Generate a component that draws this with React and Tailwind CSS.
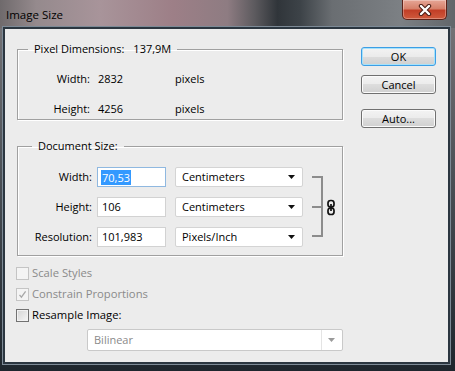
import React from 'react';

function Checkbox({ checked, disabled }) {
  return (
    <span
      className={`w-[13px] h-[13px] flex items-center justify-center border ${
        disabled
          ? 'border-[#c4c4c4] bg-[#f4f4f4]'
          : 'border-[#727272] bg-[linear-gradient(135deg,#d4d4d4,#f6f6f6)] shadow-[inset_0_0_0_1px_#f2f2f2]'
      }`}
    >
      {checked && (
        <svg width="9" height="9" viewBox="0 0 9 9">
          <path d="M1.5 4.8 L3.4 7.2 L7.6 1.4" fill="none" stroke={disabled ? '#a8a8a8' : '#333'} strokeWidth="1.3" />
        </svg>
      )}
    </span>
  );
}

function Select({ value, className, disabled }) {
  return (
    <div
      className={`h-[20px] flex items-center border rounded-[2px] bg-white ${className} ${
        disabled ? 'border-[#c9c9c9] text-[#8a8a8a]' : 'border-[#d4d4d4] text-black'
      }`}
    >
      <span className="flex-1 pl-[6px]">{value}</span>
      {disabled && <span className="w-px h-full bg-[#e4e4e4]" />}
      <svg width="20" height="8" viewBox="0 0 20 8">
        <path d="M6 2 H13 L9.5 6 Z" fill={disabled ? '#9a9a9a' : '#111'} />
      </svg>
    </div>
  );
}

function Button({ children, primary }) {
  return (
    <button
      className={`w-[75px] h-[19px] rounded-[3px] border text-black leading-none bg-[linear-gradient(180deg,#f3f3f3_0%,#ebebeb_50%,#dddddd_50%,#d0d0d0_100%)] ${
        primary
          ? 'border-[#3c9ee5] shadow-[inset_0_0_0_1px_#a6e2fb]'
          : 'border-[#707070] shadow-[inset_0_0_0_1px_#fbfbfb]'
      }`}
    >
      {children}
    </button>
  );
}

export default function App() {
  const field = 'border border-[#a0a0a0] shadow-[inset_1px_1px_0_#fff,1px_1px_0_#fff]';

  return (
    <div className="w-[455px] h-[371px] overflow-hidden flex flex-col font-['Open_Sans',sans-serif] text-[11px] bg-[linear-gradient(180deg,#7a787b_0%,#4d5258_45%,#1e262d_100%)]">
      {/* title bar */}
      <div className="h-[28px] shrink-0 flex items-start justify-between bg-[linear-gradient(90deg,#6f6a6c_0%,#958a8d_8%,#a8949a_22%,#9d7f87_38%,#8e7c82_50%,#5c5a5e_56%,#30353a_61%,#3d4348_66%,#6a6e72_73%,#7c8084_88%,#62666a_100%)]">
        <span className="pl-[6px] pt-[6px] text-[11.5px] leading-[18px] text-black">Image Size</span>
        <div className="w-[45px] h-[20px] mr-[8px] rounded-b-[5px] border border-t-0 border-[#5e2219] bg-[linear-gradient(180deg,#e6a696_0%,#d6806a_45%,#c23f27_55%,#cf5a3d_100%)] shadow-[inset_0_0_0_1px_rgba(255,255,255,0.3)] flex items-center justify-center">
          <svg width="16" height="12" viewBox="0 0 16 12">
            <path d="M4 2 L12 10 M12 2 L4 10" stroke="#4a1c14" strokeWidth="4.4" strokeLinecap="round" />
            <path d="M4 2 L12 10 M12 2 L4 10" stroke="#fff" strokeWidth="2.4" strokeLinecap="round" />
          </svg>
        </div>
      </div>

      {/* client area */}
      <div className="flex-1 ml-[4px] mr-[6px] mb-[8px] border border-[#2b3640] shadow-[0_0_0_1px_#2b3640,0_0_0_2px_#7d8a96] bg-[#ececec] flex text-black">
        <div className="w-[326px] ml-[12px] flex flex-col">
          <fieldset className={`mt-[12px] ${field} pt-[14px] pb-[2px] flex flex-col gap-[14px]`}>
            <legend className="ml-[10px] px-[6px] leading-[16px]">
              Pixel Dimensions:<span className="ml-[9px]">137,9M</span>
            </legend>
            <div className="flex leading-[16px]">
              <span className="w-[72px] text-right">Width:</span>
              <span className="w-[77px] ml-[8px]">2832</span>
              <span>pixels</span>
            </div>
            <div className="flex leading-[16px]">
              <span className="w-[72px] text-right">Height:</span>
              <span className="w-[77px] ml-[8px]">4256</span>
              <span>pixels</span>
            </div>
          </fieldset>

          <fieldset className={`mt-[18px] ${field} pt-[13px] pb-[8px] flex`}>
            <legend className="ml-[14px] px-[6px] leading-[16px]">Document Size:</legend>
            <div className="flex flex-col gap-[10px]">
              <div className="flex items-center h-[20px]">
                <span className="w-[74px] text-right">Width:</span>
                <div className="ml-[5px] w-[69px] h-[20px] border border-[#8fb8e0] bg-white flex items-center pl-[3px]">
                  <span className="bg-[#3399ff] text-white px-[1px] leading-[15px]">70,53</span>
                </div>
                <Select value="Centimeters" className="ml-[9px] w-[128px]" />
              </div>
              <div className="flex items-center h-[20px]">
                <span className="w-[74px] text-right">Height:</span>
                <div className="ml-[5px] w-[69px] h-[20px] border border-[#d2d2d2] bg-white flex items-center pl-[4px]">106</div>
                <Select value="Centimeters" className="ml-[9px] w-[128px]" />
              </div>
              <div className="flex items-center h-[20px]">
                <span className="w-[74px] text-right">Resolution:</span>
                <div className="ml-[5px] w-[69px] h-[20px] border border-[#d2d2d2] bg-white flex items-center pl-[4px]">101,983</div>
                <Select value="Pixels/Inch" className="ml-[9px] w-[128px]" />
              </div>
            </div>
            <svg width="36" height="80" viewBox="0 0 36 80">
              <path d="M9 10 H19 V69 H9 M9 40 H19" fill="none" stroke="#8c8c8c" strokeWidth="2" />
              <g fill="none" stroke="#111" strokeWidth="1.7">
                <rect x="25" y="33.5" width="6" height="6.5" rx="2.6" />
                <rect x="25" y="41" width="6" height="6.5" rx="2.6" />
                <path d="M28 37 V44" />
              </g>
            </svg>
          </fieldset>

          <div className="mt-[9px] -ml-[1px] flex flex-col gap-[5px] text-[11.25px]">
            <label className="flex items-center gap-[3px] h-[16px] text-[#8a8a8a]">
              <Checkbox disabled />
              Scale Styles
            </label>
            <label className="flex items-center gap-[3px] h-[16px] text-[#8a8a8a]">
              <Checkbox disabled checked />
              Constrain Proportions
            </label>
            <label className="flex items-center gap-[3px] h-[16px]">
              <Checkbox />
              Resample Image:
            </label>
          </div>
          <Select value="Bilinear" disabled className="mt-[6px] ml-[70px] w-[256px] h-[22px]" />
        </div>

        <div className="ml-[18px] mt-[18px] flex flex-col">
          <Button primary>OK</Button>
          <div className="mt-[9px]">
            <Button>Cancel</Button>
          </div>
          <div className="mt-[15px]">
            <Button>Auto...</Button>
          </div>
        </div>
      </div>
    </div>
  );
}
